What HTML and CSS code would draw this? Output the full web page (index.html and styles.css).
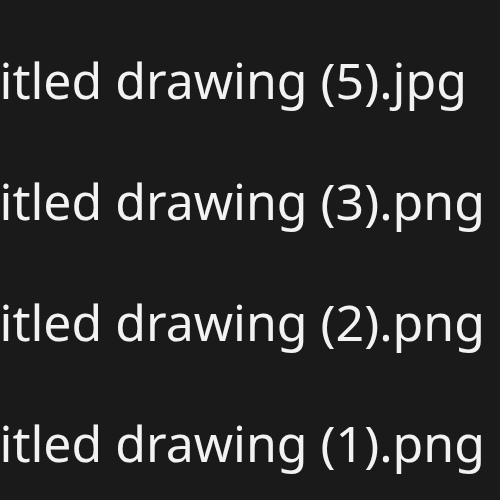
FILE: index.html
```html
<!DOCTYPE HTML>
<html>
<head>
<meta charset="utf-8">
<title>Files</title>
<link rel="stylesheet" href="styles.css">
</head>
<body>
<ul class="files">
  <li>Untitled drawing (5).jpg</li>
  <li>Untitled drawing (3).png</li>
  <li>Untitled drawing (2).png</li>
  <li>Untitled drawing (1).png</li>
</ul>
</body>
</html>
```

FILE: styles.css
```css
html, body {
  margin: 0;
  height: 100%;
  background: #1a1a1a;
  overflow: hidden;
}

.files {
  list-style: none;
  margin: 0 0 0 -86px;
  padding: 20px 0 0;
  font-family: "Noto Sans", sans-serif;
  font-size: 50px;
  color: #f2f2f2;
  white-space: nowrap;
}

.files li {
  height: 121px;
  line-height: 121px;
}
```
